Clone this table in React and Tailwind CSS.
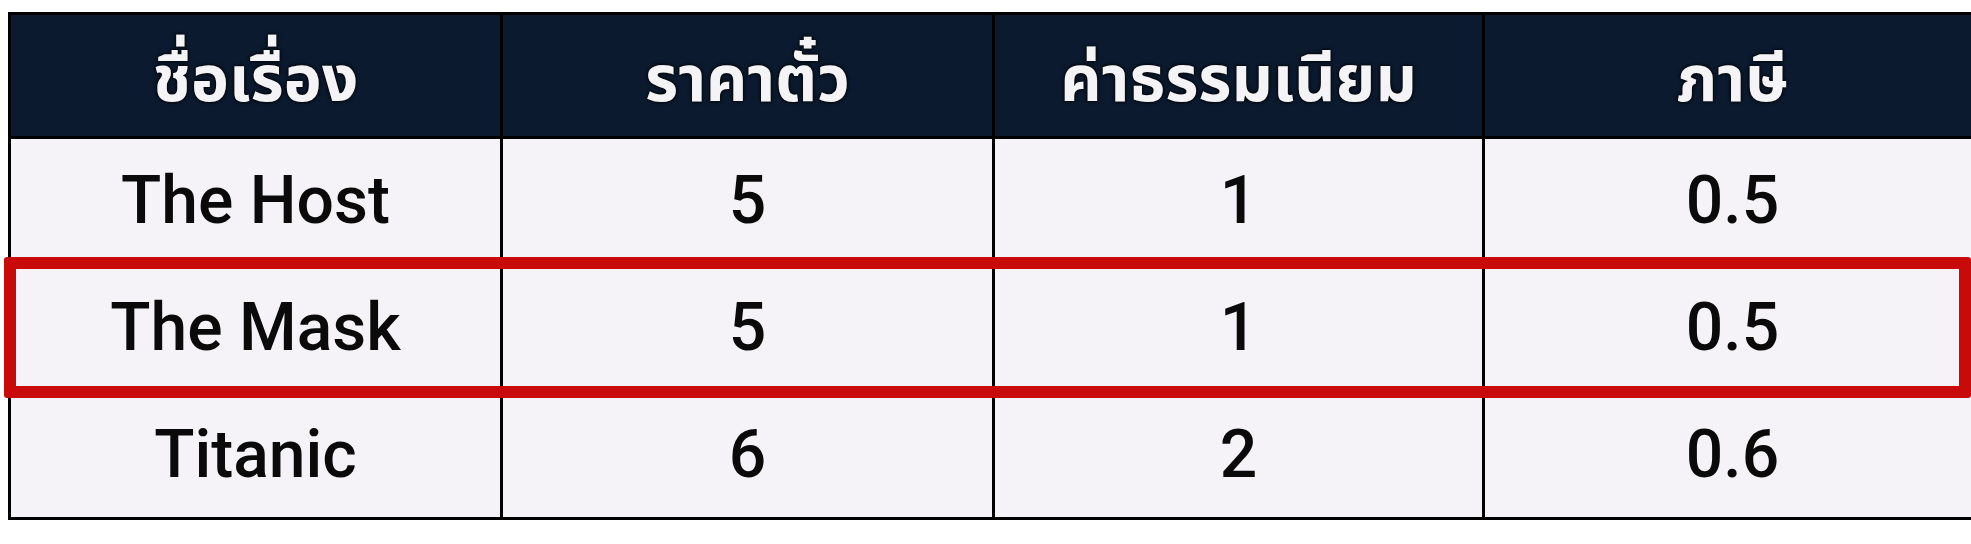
const headers = ['ชื่อเรื่อง', 'ราคาตั๋ว', 'ค่าธรรมเนียม', 'ภาษี']

const rows = [
  ['The Host', '5', '1', '0.5'],
  ['The Mask', '5', '1', '0.5'],
  ['Titanic', '6', '2', '0.6'],
]

const App = () => {
  return (
    <div className="w-[1971px] h-[544px] overflow-hidden bg-white pt-[12px] pl-[8px]">
      <div className="relative w-[1972px]">
        <table className="table-fixed border-collapse w-full">
          <colgroup>
            <col className="w-[492px]" />
            <col className="w-[492px]" />
            <col className="w-[490px]" />
            <col className="w-[498px]" />
          </colgroup>
          <thead>
            <tr className="h-[124px]">
              {headers.map((h) => (
                <th
                  key={h}
                  className="border-[3px] border-black bg-[#0b1a2e] text-[#f4f4f6] text-[64px] font-bold text-center align-middle pt-3 leading-none [font-family:'Noto_Sans_Thai','Loma','Tlwg_Typo','Noto_Sans',sans-serif] [text-shadow:0_0_2px_#000,0_0_4px_#000]"
                >
                  {h}
                </th>
              ))}
            </tr>
          </thead>
          <tbody>
            {rows.map((r) => (
              <tr key={r[0]} className="h-[127px]">
                {r.map((c, i) => (
                  <td
                    key={i}
                    className="border-[3px] border-black bg-[#f5f3f8] text-[#0a0a0a] text-[66px] font-medium text-center align-middle leading-none [font-family:Roboto,'Liberation_Sans',sans-serif]"
                  >
                    {c}
                  </td>
                ))}
              </tr>
            ))}
          </tbody>
        </table>
        {/* highlight over the Mask row */}
        <div className="absolute left-[-4px] top-[245px] w-[1967px] h-[141px] border-[12px] border-[#c80a0a] rounded-[3px] pointer-events-none" />
      </div>
    </div>
  )
}

export default App
